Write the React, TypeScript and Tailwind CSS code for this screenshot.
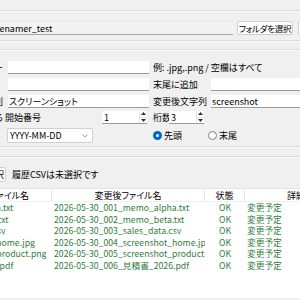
import React from 'react';

const font = { fontFamily: '"Noto Sans CJK JP", "Noto Sans", sans-serif', fontFeatureSettings: '"palt"' };

const Groove: React.FC = () => (
  <div className="w-full">
    <div className="h-px bg-[#dcdcdc]" />
    <div className="h-px bg-[#fbfbfb]" />
  </div>
);

const Entry: React.FC<{ value?: string; className?: string }> = ({ value = '', className = '' }) => (
  <div className={`h-[13px] shrink-0 bg-white border-b border-[#9a9a9a] flex items-center pl-[1px] overflow-hidden ${className}`}>
    {value}
  </div>
);

const SpinArrows: React.FC = () => (
  <div className="flex flex-col w-[8px] h-full border-l border-[#e6e6e6]">
    <div className="flex-1 flex items-center justify-center border-b border-[#e6e6e6]">
      <svg width="5" height="3" viewBox="0 0 5 3"><path d="M0 3 L2.5 0 L5 3 Z" fill="#333" /></svg>
    </div>
    <div className="flex-1 flex items-center justify-center">
      <svg width="5" height="3" viewBox="0 0 5 3"><path d="M0 0 L2.5 3 L5 0 Z" fill="#333" /></svg>
    </div>
  </div>
);

const Spin: React.FC<{ value: string; className?: string }> = ({ value, className = '' }) => (
  <div className={`h-[13px] shrink-0 bg-white border-b border-[#9a9a9a] flex items-stretch ${className}`}>
    <div className="flex-1 flex items-center pl-[2px]">{value}</div>
    <SpinArrows />
  </div>
);

const rows = [
  ['memo_alpha.txt', '2026-05-30_001_memo_alpha.txt'],
  ['memo_beta.txt', '2026-05-30_002_memo_beta.txt'],
  ['sales_data.csv', '2026-05-30_003_sales_data.csv'],
  ['screenshot_home.jpg', '2026-05-30_004_screenshot_home.jpg'],
  ['screenshot_product.png', '2026-05-30_005_screenshot_product.png'],
  ['見積書_2026.pdf', '2026-05-30_006_見積書_2026.pdf'],
];

export default function App() {
  return (
    <div className="w-[300px] h-[300px] overflow-hidden bg-[#f0f0f0] text-[9px] leading-none text-black whitespace-nowrap" style={font}>
      <div className="h-[10px]" />
      <Groove />

      {/* folder row */}
      <div className="flex items-center h-[14px] mt-[9px] gap-[4px]">
        <div className="w-[233px] h-[14px] shrink-0 bg-[#f3f3f3] border-t border-[#e6e6e6] border-b border-b-[#a8a8a8] flex items-center overflow-hidden">
          <span className="-ml-[4px]">renamer_test</span>
        </div>
        <button className="w-[56px] h-[14px] shrink-0 bg-[#fdfdfd] border border-[#d0d0d0] rounded-[2px] text-[8.5px] tracking-[-0.3px] whitespace-nowrap overflow-hidden">フォルダを選択</button>
        <button className="w-[40px] h-[14px] shrink-0 ml-[1px] bg-[#fdfdfd] border border-[#d0d0d0] rounded-[2px] text-[9px] whitespace-nowrap overflow-hidden">開く</button>
      </div>

      <div className="h-[5px]" />
      <Groove />
      <div className="h-[7px]" />
      <Groove />

      {/* options */}
      <div className="flex flex-col mt-[10px] gap-[4px]">
        <div className="flex items-center h-[13px]">
          <div className="w-[80px] -ml-[77px] shrink-0 text-right">拡張子フィルター</div>
          <Entry className="w-[141px] ml-[5px]" />
          <span className="ml-[4px]">例: .jpg,.png / 空欄はすべて</span>
        </div>
        <div className="flex items-center h-[13px]">
          <Entry className="w-[141px] ml-[8px]" />
          <span className="ml-[4px] w-[58px] shrink-0">末尾に追加</span>
          <Entry className="w-[95px]" />
        </div>
        <div className="flex items-center h-[13px]">
          <div className="w-[80px] -ml-[77px] shrink-0 text-right">追加文字列</div>
          <Entry className="w-[141px] ml-[5px]" value="スクリーンショット" />
          <span className="ml-[4px] w-[58px] shrink-0">変更後文字列</span>
          <Entry className="w-[95px]" value="screenshot" />
        </div>
        <div className="flex items-center h-[13px] mt-[-1px]">
          <div className="w-[80px] -ml-[77px] shrink-0 text-right">連番を付ける</div>
          <span className="ml-[2px] w-[97px] shrink-0">開始番号</span>
          <Spin className="w-[45px]" value="1" />
          <span className="ml-[6px] w-[16px] shrink-0">桁数</span>
          <Spin className="w-[35px]" value="3" />
        </div>
        <div className="flex items-center h-[15px]">
          <div className="w-[86px] h-[15px] shrink-0 ml-[7px] bg-white border border-[#d0d0d0] rounded-[2px] flex items-center justify-between pl-[2px] pr-[4px]">
            <span>YYYY-MM-DD</span>
            <svg width="6" height="4" viewBox="0 0 6 4"><path d="M0.5 0.5 L3 3 L5.5 0.5" fill="none" stroke="#8a8a8a" strokeWidth="0.8" /></svg>
          </div>
          <div className="flex items-center ml-[60px] w-[55px] shrink-0">
            <div className="w-[9px] h-[9px] rounded-full bg-[#0067c0] flex items-center justify-center">
              <div className="w-[3px] h-[3px] rounded-full bg-white" />
            </div>
            <span className="ml-[2px]">先頭</span>
          </div>
          <div className="flex items-center">
            <div className="w-[9px] h-[9px] rounded-full bg-white border border-[#808080]" />
            <span className="ml-[2px]">末尾</span>
          </div>
        </div>
      </div>

      <div className="h-[3px]" />
      <Groove />
      <div className="h-[8px]" />
      <Groove />

      {/* history row */}
      <div className="flex items-center h-[15px] mt-[9px]">
        <button className="w-[50px] -ml-[44px] h-[15px] shrink-0 bg-[#fdfdfd] border border-[#d0d0d0] rounded-[2px] text-[9px] flex items-center justify-end pr-[1px] whitespace-nowrap overflow-hidden">履歴CSVを選択</button>
        <span className="ml-[6px]">履歴CSVは未選択です</span>
      </div>

      {/* tree */}
      <div className="mt-[6px] bg-white border-t border-[#e5e5e5] h-[110px]">
        <div className="flex h-[13px] items-center -ml-[33px] border-b border-[#f0f0f0]">
          <div className="w-[85px] shrink-0 border-r border-[#e5e5e5] h-full flex items-center justify-center">ファイル名</div>
          <div className="w-[153px] shrink-0 border-r border-[#e5e5e5] h-full flex items-center justify-center">変更後ファイル名</div>
          <div className="w-[40px] shrink-0 border-r border-[#e5e5e5] h-full flex items-center justify-center">状態</div>
          <div className="w-[102px] shrink-0 h-full flex items-center justify-center">詳細</div>
        </div>
        <div className="flex flex-col pt-[1px] text-[#2f7d3c] text-[8.7px]">
          {rows.map(([src, dst]) => (
            <div key={dst} className="flex h-[11.5px] items-center -ml-[33px]">
              <div className="w-[85px] shrink-0 overflow-hidden">
                <span className="block -ml-[20px]">{src}</span>
              </div>
              <div className="w-[153px] shrink-0 overflow-hidden pl-[2px]">{dst}</div>
              <div className="w-[40px] shrink-0 text-center">OK</div>
              <div className="w-[102px] shrink-0 pl-[2px]">変更予定</div>
            </div>
          ))}
        </div>
      </div>
    </div>
  );
}
